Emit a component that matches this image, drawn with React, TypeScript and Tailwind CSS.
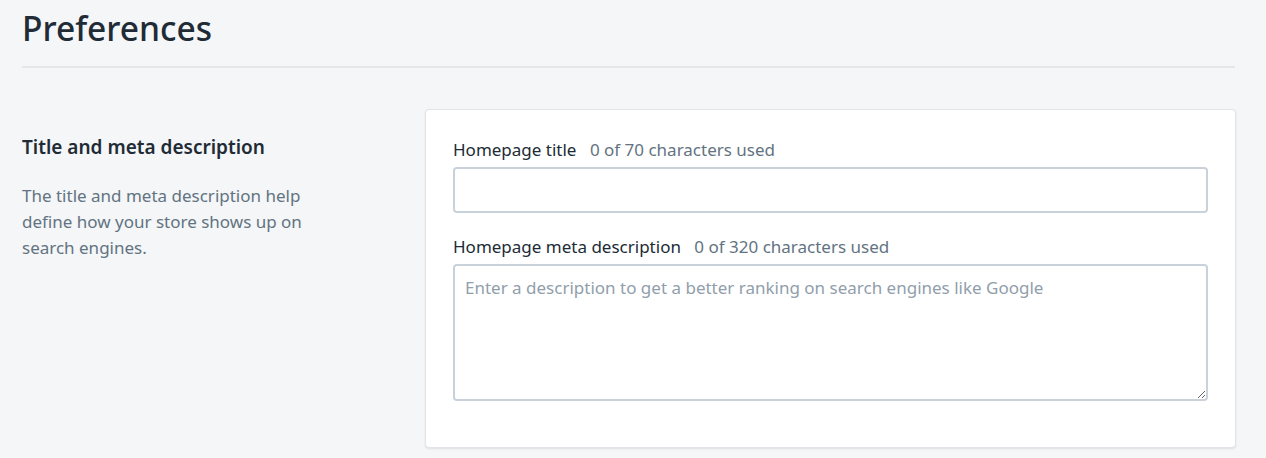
import React from "react";

export default function App() {
  return (
    <div
      className="min-h-[458px] w-full bg-[#f4f6f8] px-[22px] text-[#212b36]"
      style={{ fontFamily: '"Noto Sans", "Open Sans", sans-serif' }}
    >
      <div className="border-b-2 border-[#e3e6ea] pb-[14px] pt-[4px] mr-[9px]">
        <h1 className="text-[33.5px] leading-[48px] font-medium">Preferences</h1>
      </div>
      <div className="mt-[41px] flex">
        <div className="w-[403px] shrink-0 pt-[26px]">
          <h2 className="text-[19px] leading-[24px] font-semibold">Title and meta description</h2>
          <p className="mt-[24px] w-[300px] text-[17px] leading-[26px] text-[#637381]">
            The title and meta description help define how your store shows up on search engines.
          </p>
        </div>
        <div className="mr-[8px] flex-1 rounded-[4px] border border-[#e1e4e8] bg-white px-[27px] pb-[46px] pt-[28px] shadow-[0_1px_2px_rgba(63,63,68,0.12)]">
          <label className="block text-[17px] leading-[24px]">
            Homepage title <span className="ml-[9px] text-[#637381]">0 of 70 characters used</span>
          </label>
          <input
            type="text"
            className="mt-[5px] block h-[46px] w-full rounded-[4px] border-2 border-[#c9d2da] bg-white px-[10px] outline-none"
          />
          <label className="mt-[22px] block text-[17px] leading-[24px]">
            Homepage meta description <span className="ml-[9px] text-[#637381]">0 of 320 characters used</span>
          </label>
          <textarea
            placeholder="Enter a description to get a better ranking on search engines like Google"
            className="mt-[5px] block h-[137px] w-full rounded-[4px] border-2 border-[#c9d2da] bg-white px-[10px] pb-[10px] pt-[10px] text-[17px] leading-[24px] outline-none placeholder:text-[#919eab]"
          />
        </div>
      </div>
    </div>
  );
}
